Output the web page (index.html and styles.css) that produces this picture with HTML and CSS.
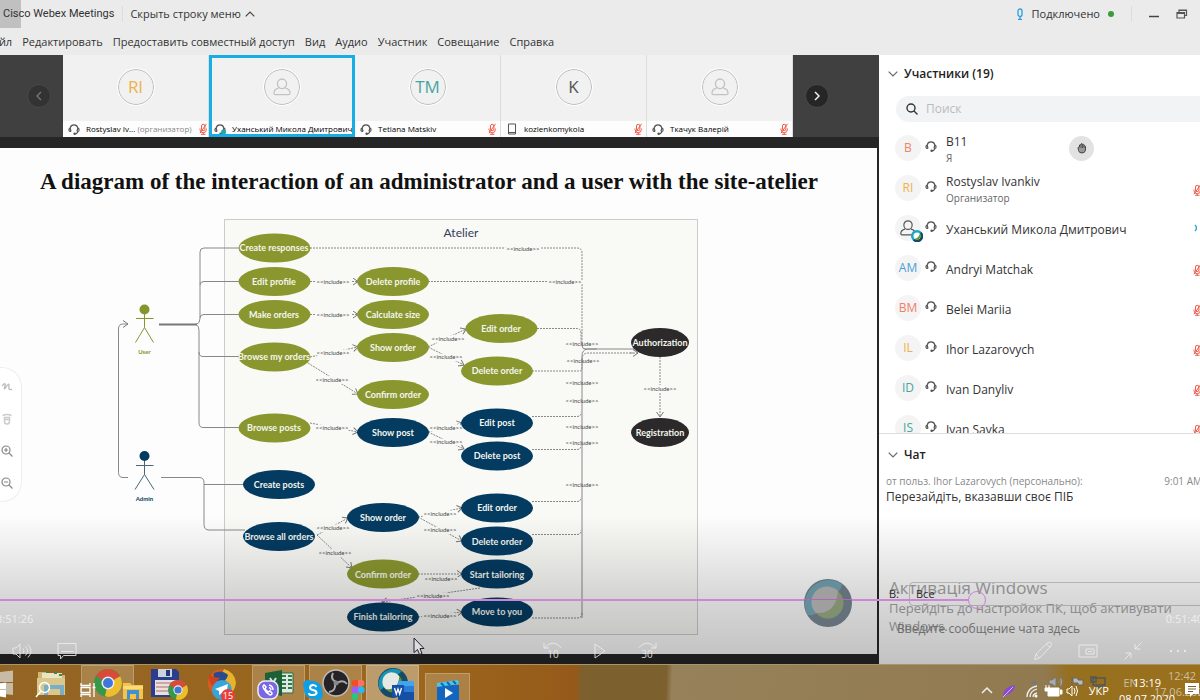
FILE: index.html
```html
<!DOCTYPE html>
<html lang="ru">
<head>
    <meta charset="UTF-8">
    <meta name="viewport" content="width=device-width, initial-scale=1.0">
    <title>Cisco Webex Meetings</title>
    <link rel="stylesheet" href="styles.css">
</head>
<body>
    <!-- Shared icons -->
    <svg class="sprite" aria-hidden="true">
        <symbol id="headset" viewBox="0 0 12 12">
            <path d="M3 8.500H2.200A1.300 1.300 0 0 1 1 7.200V6.400A1.200 1.200 0 0 1 2.200 5.200V4.800a3.900 3.900 0 0 1 7.600 0v.4A1.200 1.200 0 0 1 11 6.400v.8a1.300 1.300 0 0 1-1.200 1.300C9.600 10 8.500 10.800 7 10.800M2.200 5.200L3 8.500M9.800 5.200L9 8.500" fill="none" stroke="currentColor" stroke-width="1.200"/>
            <circle cx="6.600" cy="10.700" r="1.200" fill="currentColor"/>
        </symbol>
        <symbol id="muted" viewBox="0 0 10 12">
            <path d="M3.500 3a1.700 1.700 0 0 1 3.400 0v3a1.700 1.700 0 0 1-3.400 0zM2 5.500v1a3.200 3.200 0 0 0 6.400 0v-1M5.200 9.700v1.500M3 11.300h4.500M8.500 .8L2 10.200" fill="none" stroke="currentColor" stroke-width="1"/>
        </symbol>
        <symbol id="person" viewBox="0 0 20 20">
            <path d="M10 2a4.600 4.600 0 0 1 4.600 4.600c0 2.700-2 5-4.600 5s-4.600-2.300-4.600-5A4.600 4.600 0 0 1 10 2zM6.700 11.200C4 11.800 2 13.500 2 16.200c0 1 .6 1.500 1.500 1.500h13c.9 0 1.500-.5 1.500-1.500 0-2.700-2-4.400-4.700-5" fill="none" stroke="currentColor" stroke-width="1.300"/>
        </symbol>
        <symbol id="chrome" viewBox="0 0 28 28">
            <circle cx="14" cy="14" r="14" fill="#37974b"/>
            <path d="M14 14L1.900 7A14 14 0 0 1 26.100 7z" fill="#d84b3a"/>
            <path d="M14 14L26.100 7A14 14 0 0 1 14 28l-3-1 3-13z" fill="#edbd2e"/>
            <path d="M14 7h12.100L14 14z" fill="#d84b3a"/>
            <circle cx="14" cy="14" r="6.500" fill="#eee"/>
            <circle cx="14" cy="14" r="5" fill="#3d78d8"/>
        </symbol>
        <symbol id="chevron-down" viewBox="0 0 10 6">
            <path d="M.7.700L5 5 9.300.7" fill="none" stroke="currentColor" stroke-width="1.200"/>
        </symbol>
    </svg>

    <header class="header">
        <div class="titlebar">
            <span class="app-name">Cisco Webex Meetings</span>
            <button class="hide-menu" type="button">Скрыть строку меню
                <svg width="10" height="6" viewBox="0 0 10 6"><path d="M.7 5.300L5 1l4.300 4.300" fill="none" stroke="#444" stroke-width="1.200"/></svg>
            </button>
            <div class="status">
                <svg width="8" height="12" viewBox="0 0 8 12"><path d="M2 3a2 2 0 0 1 4 0v3.500a2 2 0 0 1-4 0zM4 9v2M2 11.300h4" fill="none" stroke="#2ba0dc" stroke-width="1.300"/></svg>
                <span>Подключено</span>
                <i class="dot"></i>
            </div>
            <div class="window-buttons">
                <button type="button" aria-label="Свернуть"><svg width="10" height="12" viewBox="0 0 10 12"><path d="M0 8.500h10" stroke="#444" stroke-width="1.500"/></svg></button>
                <button type="button" aria-label="Восстановить"><svg width="12" height="12" viewBox="0 0 12 12"><path d="M1 4.500h7.500v5.500H1zM3 4V2h7.500v5.500H9M1 5.500h7.500M3 2.500h7" fill="none" stroke="#555" stroke-width="1.200"/></svg></button>
            </div>
        </div>
        <nav class="menubar">
            <button type="button">Файл</button>
            <button type="button">Редактировать</button>
            <button type="button">Предоставить совместный доступ</button>
            <button type="button">Вид</button>
            <button type="button">Аудио</button>
            <button type="button">Участник</button>
            <button type="button">Совещание</button>
            <button type="button">Справка</button>
        </nav>
    </header>

    <main class="meeting">
        <section class="stage">
            <div class="filmstrip">
                <button class="scroll prev" type="button" aria-label="Назад"><svg width="8" height="10" viewBox="0 0 8 10"><path d="M6 1L2 5l4 4" fill="none" stroke="currentColor" stroke-width="1.300"/></svg></button>
                <div class="tiles">
                    <div class="tile">
                        <div class="face yellow">RI</div>
                        <div class="caption"><svg class="hs"><use href="#headset"/></svg><span>Rostyslav Iv... <em>(организатор)</em></span><svg class="mic"><use href="#muted"/></svg></div>
                    </div>
                    <div class="tile active">
                        <div class="face"><svg width="20" height="20"><use href="#person"/></svg></div>
                        <div class="caption"><svg class="hs" viewBox="0 0 12 12"><use href="#headset"/><circle cx="9.500" cy="9" r="2.500" fill="#1caab0"/></svg><span>Уханський Микола Дмитрович</span></div>
                    </div>
                    <div class="tile">
                        <div class="face teal">TM</div>
                        <div class="caption"><svg class="hs"><use href="#headset"/></svg><span>Tetiana Matskiv</span><svg class="mic"><use href="#muted"/></svg></div>
                    </div>
                    <div class="tile">
                        <div class="face dark">K</div>
                        <div class="caption"><svg class="hs" viewBox="0 0 12 12"><path d="M2.500 1h7v10h-7zM2.500 9.500h7" fill="none" stroke="currentColor"/></svg><span>kozlenkomykola</span><svg class="mic"><use href="#muted"/></svg></div>
                    </div>
                    <div class="tile">
                        <div class="face"><svg width="20" height="20"><use href="#person"/></svg></div>
                        <div class="caption"><svg class="hs"><use href="#headset"/></svg><span>Ткачук Валерій</span><svg class="mic"><use href="#muted"/></svg></div>
                    </div>
                </div>
                <button class="scroll next" type="button" aria-label="Вперёд"><svg width="8" height="10" viewBox="0 0 8 10"><path d="M2 1l4 4-4 4" fill="none" stroke="currentColor" stroke-width="1.500"/></svg></button>
            </div>

            <div class="slide">
                <h1>A diagram of the interaction of an administrator and a user with the site-atelier</h1>
                <svg class="diagram" viewBox="100 210 620 440">
                    <defs>
                        <marker id="arrow" viewBox="0 0 8 8" refX="7" refY="4" markerWidth="8" markerHeight="8" markerUnits="userSpaceOnUse" orient="auto"><path d="M2 .5L7 4 2 7.500" fill="none" stroke="#777"/></marker>
                    </defs>
                    <rect class="frame" x="224.500" y="219.500" width="473" height="415"/>
                    <text class="heading" x="461" y="237">Atelier</text>

                    <!-- actors -->
                    <g class="actor user">
                        <circle cx="144.500" cy="309.500" r="5"/>
                        <path d="M144.500 314v13.500l-9 15M144.500 327.500l9 15M136 318.500h17.500"/>
                        <text x="144.500" y="354">User</text>
                    </g>
                    <g class="actor admin">
                        <circle cx="144.500" cy="456" r="5"/>
                        <path d="M144.500 461v13.500l-9.500 15M144.500 474.500l9.500 15M136 465.500h17.500"/>
                        <text x="144.500" y="501">Admin</text>
                    </g>

                    <!-- solid links -->
                    <g class="link">
                        <path marker-end="url(#arrow)" d="M128 477.500h-5q-4.500 0-4.500-5V329q0-5 4.500-5h5"/>
                        <path d="M159 324.500h37q4-1 4-6V252q0-4 4-4h35M200 285q0-3.500 4-3.500h35M200 318q0-3.500 4-3.500h35M196 324.500q3 1 3 6v92q0 5 4 5h36M199 352q0 4.500 4 4.500h36"/>
                        <path class="thick" d="M159 324.500h38"/>
                        <path d="M161 477.500h38q5 0 5 5v42q0 5.500 5 5.500h36M204 484.500h40"/>
                        <path d="M596 349h39M582 342v4q0 3 4 3h10M582 618V356q0-6 5-7h10"/>
                    </g>

                    <!-- dashed links -->
                    <g class="link dashed">
                        <path d="M310 248h267q5 0 5 5v90M428 281.500h153M537 328.500h40q4 0 4 5v8M532 371h48q2 0 2-5v-6q0-7 6-7h45"/>
                        <path d="M532 416.500h45q4 0 4-4M532 449.500h45q4 0 4-4M532 501.500h45q4 0 4-4M532 534.500h45q4 0 4-4M532 618h45q5 0 5-5"/>
                        <path marker-end="url(#arrow)" d="M630 353h8"/>
                        <path marker-end="url(#arrow)" d="M660 357v60"/>
                        <path marker-end="url(#arrow)" d="M310 281.500h48"/>
                        <path marker-end="url(#arrow)" d="M310 314.500h48"/>
                        <path marker-end="url(#arrow)" d="M310 357l48-10"/>
                        <path marker-end="url(#arrow)" d="M308 363l50 31"/>
                        <path marker-end="url(#arrow)" d="M310 423l48 9"/>
                        <path marker-end="url(#arrow)" d="M428 347l38-18"/>
                        <path marker-end="url(#arrow)" d="M428 347l36 18"/>
                        <path marker-end="url(#arrow)" d="M428 432l34-9"/>
                        <path marker-end="url(#arrow)" d="M428 432l36 17"/>
                        <path marker-end="url(#arrow)" d="M317 535l31-17"/>
                        <path marker-end="url(#arrow)" d="M317 535l35 33"/>
                        <path marker-end="url(#arrow)" d="M418 517l44-9"/>
                        <path marker-end="url(#arrow)" d="M418 517l44 24"/>
                        <path marker-end="url(#arrow)" d="M418 574h44"/>
                        <path marker-end="url(#arrow)" d="M480 588l-98 14"/>
                        <path marker-end="url(#arrow)" d="M418 617l44-5"/>
                    </g>
                    <g class="include">
                        <text x="523" y="251">&lt;&lt;include&gt;&gt;</text>
                        <text x="565" y="284">&lt;&lt;include&gt;&gt;</text>
                        <text x="333" y="284">&lt;&lt;include&gt;&gt;</text>
                        <text x="333" y="317">&lt;&lt;include&gt;&gt;</text>
                        <text x="333" y="355">&lt;&lt;include&gt;&gt;</text>
                        <text x="332" y="382">&lt;&lt;include&gt;&gt;</text>
                        <text x="332" y="430">&lt;&lt;include&gt;&gt;</text>
                        <text x="448" y="341">&lt;&lt;include&gt;&gt;</text>
                        <text x="446" y="359">&lt;&lt;include&gt;&gt;</text>
                        <text x="446" y="430">&lt;&lt;include&gt;&gt;</text>
                        <text x="446" y="444">&lt;&lt;include&gt;&gt;</text>
                        <text x="333" y="530">&lt;&lt;include&gt;&gt;</text>
                        <text x="335" y="555">&lt;&lt;include&gt;&gt;</text>
                        <text x="440" y="516">&lt;&lt;include&gt;&gt;</text>
                        <text x="440" y="532">&lt;&lt;include&gt;&gt;</text>
                        <text x="441" y="581">&lt;&lt;include&gt;&gt;</text>
                        <text x="433" y="598">&lt;&lt;include&gt;&gt;</text>
                        <text x="440" y="618">&lt;&lt;include&gt;&gt;</text>
                        <text x="660" y="391">&lt;&lt;include&gt;&gt;</text>
                    </g>
                    <g class="include crossing">
                        <text x="582" y="346">&lt;&lt;include&gt;&gt;</text>
                        <text x="583" y="363">&lt;&lt;include&gt;&gt;</text>
                        <text x="582" y="385">&lt;&lt;include&gt;&gt;</text>
                        <text x="582" y="403">&lt;&lt;include&gt;&gt;</text>
                        <text x="582" y="429">&lt;&lt;include&gt;&gt;</text>
                        <text x="582" y="445">&lt;&lt;include&gt;&gt;</text>
                        <text x="582" y="487">&lt;&lt;include&gt;&gt;</text>
                    </g>

                    <!-- use cases -->
                    <g class="node green">
                        <ellipse cx="274.500" cy="248" rx="36" ry="14.500"/><text x="274" y="251">Create responses</text>
                        <ellipse cx="274.500" cy="281.500" rx="36" ry="14.500"/><text x="274" y="285">Edit profile</text>
                        <ellipse cx="274.500" cy="314.500" rx="36" ry="14.500"/><text x="274" y="318">Make orders</text>
                        <ellipse cx="274.500" cy="357" rx="36" ry="14.500"/><text x="274" y="360">Browse my orders</text>
                        <ellipse cx="274.500" cy="428" rx="36" ry="14.500"/><text x="274" y="431">Browse posts</text>
                        <ellipse cx="393" cy="281.500" rx="36" ry="14.500"/><text x="393" y="285">Delete profile</text>
                        <ellipse cx="393" cy="314.500" rx="36" ry="14.500"/><text x="393" y="318">Calculate size</text>
                        <ellipse cx="393" cy="347.500" rx="36" ry="14.500"/><text x="393" y="351">Show order</text>
                        <ellipse cx="393" cy="394.500" rx="36" ry="14.500"/><text x="393" y="398">Confirm order</text>
                        <ellipse cx="501.500" cy="328.500" rx="36" ry="14.500"/><text x="501" y="332">Edit order</text>
                        <ellipse cx="497" cy="371" rx="36" ry="14.500"/><text x="497" y="374">Delete order</text>
                        <ellipse cx="383" cy="574" rx="36" ry="14.500"/><text x="383" y="578">Confirm order</text>
                    </g>
                    <g class="node blue">
                        <ellipse cx="393" cy="432.500" rx="36" ry="14.500"/><text x="393" y="436">Show post</text>
                        <ellipse cx="497" cy="423" rx="36" ry="14.500"/><text x="497" y="426">Edit post</text>
                        <ellipse cx="497" cy="456" rx="36" ry="14.500"/><text x="497" y="459">Delete post</text>
                        <ellipse cx="279" cy="484.500" rx="36" ry="14.500"/><text x="279" y="488">Create posts</text>
                        <ellipse cx="279" cy="536.500" rx="36" ry="14.500"/><text x="279" y="540">Browse all orders</text>
                        <ellipse cx="383" cy="517.500" rx="36" ry="14.500"/><text x="383" y="521">Show order</text>
                        <ellipse cx="497" cy="508" rx="36" ry="14.500"/><text x="497" y="511">Edit order</text>
                        <ellipse cx="497" cy="541" rx="36" ry="14.500"/><text x="497" y="545">Delete order</text>
                        <ellipse cx="497" cy="574" rx="36" ry="14.500"/><text x="497" y="578">Start tailoring</text>
                        <ellipse cx="383" cy="617" rx="36" ry="14.500"/><text x="383" y="620">Finish tailoring</text>
                        <ellipse cx="497" cy="612" rx="36" ry="14.500"/><text x="497" y="615">Move to you</text>
                    </g>
                    <g class="node black">
                        <ellipse cx="660" cy="342.500" rx="29" ry="14.500"/><text x="660" y="346">Authorization</text>
                        <ellipse cx="660" cy="432.500" rx="29" ry="14.500"/><text x="660" y="436">Registration</text>
                    </g>
                </svg>

                <div class="zoom-tools">
                    <button type="button" aria-label="Аннотация"><svg width="12" height="12" viewBox="0 0 12 12"><path d="M1 5c2-3 4-3 3 0s-1 4 1 1 3-4 3-1-1 4 3 3.500" fill="none" stroke="#bbb" stroke-width="1.300"/></svg></button>
                    <button type="button" aria-label="Указатель"><svg width="12" height="12" viewBox="0 0 12 12"><path d="M1.500 2.500Q6 .5 10.500 2.500M3.500 4.500h5v4a2.500 2.500 0 0 1-5 0zM3.500 6.500h5" fill="none" stroke="#ccc" stroke-width="1.500"/></svg></button>
                    <button type="button" aria-label="Увеличить"><svg width="12" height="12" viewBox="0 0 12 12"><path d="M5 1a4 4 0 1 1 0 8 4 4 0 0 1 0-8zM8 8l3.500 3.500M3 5h4M5 3v4" fill="none" stroke="#888" stroke-width="1.200"/></svg></button>
                    <button type="button" aria-label="Уменьшить"><svg width="12" height="12" viewBox="0 0 12 12"><path d="M5 1a4 4 0 1 1 0 8 4 4 0 0 1 0-8zM8 8l3.500 3.500M3 5h4" fill="none" stroke="#888" stroke-width="1.200"/></svg></button>
                </div>
            </div>
        </section>

        <aside class="sidebar">
            <section class="participants">
                <h2><svg width="10" height="6"><use href="#chevron-down"/></svg>Участники (19)</h2>
                <label class="search">
                    <svg width="12" height="12" viewBox="0 0 12 12"><path d="M5 1a4 4 0 1 1 0 8 4 4 0 0 1 0-8zM8 8l3.500 3.500" fill="none" stroke="#333" stroke-width="1.400"/></svg>
                    <input type="search" placeholder="Поиск" aria-label="Поиск">
                </label>
                <ul>
                    <li><span class="avatar red">B</span><svg class="hs"><use href="#headset"/></svg><span class="name">B11<small>Я</small></span>
                        <button class="hand" type="button" aria-label="Рука"><svg width="12" height="12" viewBox="0 0 12 12"><path d="M2 5.500l1.500-.5V3q1-1 1.500 0V2q1-1 1.500 0v.5q1-.8 1.500.3v1q1-.6 1.500.5V8q-.5 3-3.500 3T2.500 8.500z" fill="#999" stroke="#444"/><path d="M5 3v3M6.500 3v3M8 4v2" stroke="#444" stroke-width=".8"/></svg></button></li>
                    <li><span class="avatar yellow">RI</span><svg class="hs"><use href="#headset"/></svg><span class="name">Rostyslav Ivankiv<small>Организатор</small></span><svg class="mic"><use href="#muted"/></svg></li>
                    <li><span class="avatar dark"><svg width="18" height="18"><use href="#person"/></svg><svg class="ball" viewBox="0 0 12 12"><circle cx="6" cy="6" r="6" fill="#18a5c8"/><path d="M10.500 2A6 6 0 0 1 2 10.500z" fill="#174a66"/><circle cx="6" cy="6" r="3.500" fill="#fff"/><path d="M9 3.500A4 4 0 0 1 3.500 9q4-1 5.500-5.500" fill="#5a9c36"/></svg></span><svg class="hs"><use href="#headset"/></svg><span class="name">Уханський Микола Дмитрович</span><svg class="talk" viewBox="0 0 6 10"><path d="M1 2q3 3 0 6" fill="none" stroke="#2ba0dc" stroke-width="1.300"/></svg></li>
                    <li><span class="avatar blue">AM</span><svg class="hs"><use href="#headset"/></svg><span class="name">Andryi Matchak</span><svg class="mic"><use href="#muted"/></svg></li>
                    <li><span class="avatar red">BM</span><svg class="hs"><use href="#headset"/></svg><span class="name">Belei Mariia</span><svg class="mic"><use href="#muted"/></svg></li>
                    <li><span class="avatar yellow">IL</span><svg class="hs"><use href="#headset"/></svg><span class="name">Ihor Lazarovych</span><svg class="mic"><use href="#muted"/></svg></li>
                    <li><span class="avatar teal">ID</span><svg class="hs"><use href="#headset"/></svg><span class="name">Ivan Danyliv</span><svg class="mic"><use href="#muted"/></svg></li>
                    <li><span class="avatar teal">IS</span><svg class="hs"><use href="#headset"/></svg><span class="name">Ivan Savka</span><svg class="mic"><use href="#muted"/></svg></li>
                </ul>
            </section>
            <section class="chat">
                <h2><svg width="10" height="6"><use href="#chevron-down"/></svg>Чат</h2>
                <div class="message">
                    <div class="meta"><span>от польз. Ihor Lazarovych (персонально):</span><time>9:01 AM</time></div>
                    <p>Перезайдіть, вказавши своє ПІБ</p>
                </div>
                <div class="recipient">
                    <label for="to">В:</label>
                    <select id="to"><option>Все</option></select>
                </div>
                <textarea placeholder="Введите сообщение чата здесь" aria-label="Сообщение"></textarea>
            </section>
            <div class="watermark">
                <strong>Активація Windows</strong>
                Перейдіть до настройок ПК, щоб активувати Windows.
            </div>
        </aside>

        <!-- playback controls laid over the recording -->
        <div class="player">
            <input class="seek" type="range" min="0" max="1000" value="819" aria-label="Позиция">
            <div class="times"><span class="elapsed">3:51:26</span><span class="remaining">0:51:40</span></div>
            <div class="controls">
                <div class="group left">
                    <button type="button" aria-label="Громкость"><svg width="20" height="18" viewBox="0 0 20 18"><path d="M1 6h3l4-4v14l-4-4H1zM11 6.500q2 2.500 0 5M13.500 4.500q4 4.500 0 9M16 2.500q6 6.500 0 13"/></svg></button>
                    <button type="button" aria-label="Субтитры"><svg width="20" height="18" viewBox="0 0 20 18"><path d="M1 1.500h18v12H6.500l-3 3.500v-3.500H1zM4 9.500h13"/></svg></button>
                </div>
                <div class="group center">
                    <button type="button" aria-label="Назад 10"><svg width="20" height="20" viewBox="0 0 20 20"><path d="M1 2v5h5M1.500 7Q10-3 18.500 7"/><text x="10" y="17">10</text></svg></button>
                    <button type="button" aria-label="Пуск"><svg width="12" height="18" viewBox="0 0 12 18"><path d="M1 2l10 7-10 7z"/></svg></button>
                    <button type="button" aria-label="Вперёд 30"><svg width="20" height="20" viewBox="0 0 20 20"><path d="M19 2v5h-5M18.500 7Q10-3 1.500 7"/><text x="10" y="17">30</text></svg></button>
                </div>
                <div class="group right">
                    <button type="button" aria-label="Править"><svg width="20" height="20" viewBox="0 0 20 20"><path d="M1.500 18.500l1.500-5.500L15 1.500q2-1 3 .5t0 3L6.500 17zM3 13l3.500 4M13.500 3l3.500 3.500"/></svg></button>
                    <button type="button" aria-label="Мини-окно"><svg width="20" height="14" viewBox="0 0 20 14"><path d="M1 1h18v12H1zM8 5h8v5H8zM10 7.500h4"/></svg></button>
                    <button type="button" aria-label="Свернуть"><svg width="20" height="20" viewBox="0 0 20 20"><path d="M18.500 1.500L12 8M12 3v5h5.500M1.500 18.500L8 12M8 17v-5H2.500"/></svg></button>
                    <button type="button" aria-label="Ещё"><svg width="20" height="4" viewBox="0 0 20 4"><path d="M2 2h2M9 2h2M16 2h2" stroke-width="2"/></svg></button>
                </div>
            </div>
        </div>
        <svg class="webex-ball" viewBox="0 0 48 48">
            <circle cx="24" cy="24" r="24" fill="#64717b"/>
            <path d="M3.500 36A24 24 0 0 1 38 5q-1 6-5 9L15 32q-4 5-11.500 4z" fill="#648e9c"/>
            <circle cx="24" cy="24" r="15.500" fill="#80906f"/>
            <path d="M34 12a15.500 15.500 0 1 0-22 22q20 1 22-22z" fill="#a09f9f"/>
            <path d="M0 20.500h48" stroke="#b067b8"/>
        </svg>
        <svg class="cursor" viewBox="0 0 12 18"><path d="M1 1v14.500l3.500-3 2 5 2.500-1-2-5H11z" fill="#ddd" stroke="#223"/></svg>
    </main>

    <footer class="taskbar">
        <div class="apps">
            <button class="start" type="button" aria-label="Пуск"><svg width="14" height="28" viewBox="0 0 14 28"><path d="M0 3l13-1.500V13H0zM0 14h13v12L0 24.500z" fill="#c7bba6"/></svg></button>
            <button type="button" aria-label="Проводник"><svg width="30" height="28" viewBox="0 0 30 28"><path d="M2 3h10l2 3h15v20H2z" fill="#cdb878"/><path d="M6 4h20v8H6z" fill="#eee3c0"/><path d="M1 9h28v17H1z" fill="#d9c88e"/><path d="M8 16h20v10h-4v-6H12v6H8z" fill="#78aec8"/><path d="M10 3h3M18 4h3M23 6h3" stroke="#37875b" stroke-width="2"/></svg></button>
            <button class="open" type="button" aria-label="Chrome"><svg width="28" height="28"><use href="#chrome"/></svg></button>
            <button type="button" aria-label="Диск"><svg width="30" height="30" viewBox="0 0 30 30"><path d="M1 1h25l3 3v25H1z" fill="#2b3d91"/><path d="M8 1h14v8H8z" fill="#ccd3dc"/><path d="M16 2h4v6h-4z" fill="#26357d"/><path d="M5 12h21v15H5z" fill="#e8e2df"/><path d="M6 15h19M6 19h19M6 23h19" stroke="#b46b6b"/></svg></button>
            <button type="button" aria-label="Firefox"><svg width="30" height="30" viewBox="0 0 30 30"><circle cx="14.500" cy="15" r="13.500" fill="#dc5a20"/><path d="M17 1q11 3 12 14-1 9-9 13 3-10-2-16-4-6-1-11z" fill="#e8b32c"/><path d="M7 5q8-4 14 2-2 8-10 7-6-4-4-9z" fill="#294a8c"/><path d="M2 6l4 3 7 1-4 4 1 5q-8 1-8-13z" fill="#cc431d"/></svg></button>
            <button class="open" type="button" aria-label="Excel"><svg width="30" height="28" viewBox="0 0 30 28"><path d="M13 4h16v20H13z" fill="#dfe9df" stroke="#246c42"/><path d="M18 7h4M24 7h4M18 11h4M24 11h4M18 15h4M24 15h4M18 19h4M24 19h4" stroke="#2b7a4b" stroke-width="2"/><path d="M1 4l17-3v26L1 24z" fill="#1c6038"/><path d="M6 9l6 10M12 9L6 19" stroke="#ddd" stroke-width="2"/></svg></button>
            <button class="open" type="button" aria-label="OBS"><svg width="28" height="28" viewBox="0 0 28 28"><circle cx="14" cy="14" r="13" fill="#252325" stroke="#bbb" stroke-width="1.500"/><path d="M14 13Q8 10 11 4M15 14q6-4 10 1M13 15q1 7-6 8" fill="none" stroke="#aaa" stroke-width="2"/><circle cx="14" cy="14" r="2.500" fill="#888"/></svg></button>
            <button class="open current" type="button" aria-label="Webex"><svg width="30" height="30" viewBox="0 0 48 48"><circle cx="24" cy="24" r="24" fill="#174a66"/><path d="M3.500 36A24 24 0 0 1 38 5z" fill="#1b93b0"/><circle cx="24" cy="24" r="15" fill="#57923c"/><path d="M34 13a15 15 0 1 0-21 21q20 1 21-21z" fill="#e5e9e5"/></svg></button>
        </div>
        <div class="apps front">
            <button class="start" type="button" aria-label="Пуск"><svg width="7" height="16" viewBox="0 0 7 16"><path d="M0 1.500L6 .5V7H0zM0 8h6v7.500L0 14.500z" fill="#fff"/></svg></button>
            <button type="button" aria-label="Поиск"><svg width="16" height="18" viewBox="0 0 16 18"><circle cx="9.500" cy="6.500" r="5" fill="none" stroke="#fff" stroke-width="1.500"/><path d="M6 10l-5 6" stroke="#fff" stroke-width="1.500"/></svg></button>
            <button type="button" aria-label="Задачи"><svg width="16" height="16" viewBox="0 0 16 16"><path d="M1 1v2.500h9V1M1 5.500h9v5H1zM1 15v-2.500h9V15M14 1v14M12.500 5.500h3" fill="none" stroke="#fff" stroke-width="1.300"/></svg></button>
            <button type="button" aria-label="Файлы"><svg width="20" height="18" viewBox="0 0 20 18"><path d="M0 2h7l2 2h11v14H0z" fill="#f6c445"/><path d="M4 9h12v9h-3v-5H7v5H4z" fill="#3d91d5"/><path d="M0 5h20v3H0z" fill="#fbdc78"/></svg></button>
            <button type="button" aria-label="Chrome"><svg width="20" height="20"><use href="#chrome"/></svg></button>
            <button type="button" aria-label="Telegram"><svg width="24" height="20" viewBox="0 0 24 20"><circle cx="11" cy="10" r="10" fill="#35a5dc"/><path d="M4 9l13-5-2 12-4-3-3 2V11z" fill="#fff"/><circle cx="17" cy="16" r="7" fill="#e9403b"/><text class="badge" x="17" y="19">15</text></svg></button>
            <button type="button" aria-label="Viber"><svg width="22" height="20" viewBox="0 0 22 20"><rect x="1" y="1" width="20" height="18" rx="7" fill="#7967e8" stroke="#eee" stroke-width="1.500"/><path d="M7 5q-2 1 0 4 2 4 6 6 2 0 2-2l-2-2-2 1-3-3 1-2zM12 5q4 1 4 5M12 7.500q2 .5 2 2.500" fill="none" stroke="#fff" stroke-width="1.500"/></svg></button>
            <button type="button" aria-label="Skype"><svg width="20" height="20" viewBox="0 0 20 20"><circle cx="10" cy="10" r="9" fill="#0d9fe6"/><circle cx="5" cy="5" r="5" fill="#0d9fe6"/><circle cx="15" cy="15" r="5" fill="#0d9fe6"/><path d="M13.500 7q-1-2-3.500-2T7 7.500q0 2 3 2.500t3.500 2.500-3.500 2.500-4-2" fill="none" stroke="#fff" stroke-width="2"/></svg></button>
            <button type="button" aria-label="Figma"><svg width="14" height="20" viewBox="0 0 14 20"><path d="M7 0H4a3.300 3.300 0 0 0 0 6.600h3z" fill="#f04e23"/><path d="M7 0h3a3.300 3.300 0 0 1 0 6.600H7z" fill="#ff7262"/><path d="M7 6.600H4a3.300 3.300 0 0 0 0 6.600h3z" fill="#a259ff"/><circle cx="10.300" cy="9.900" r="3.300" fill="#25b8fa"/><path d="M7 13.200H4A3.300 3.300 0 1 0 7 16.500z" fill="#20c980"/></svg></button>
            <button type="button" aria-label="Word"><svg width="22" height="20" viewBox="0 0 22 20"><path d="M6 1h16v19H6z" fill="#2c7cd6"/><path d="M6 1h16v5H6z" fill="#41a5ee"/><path d="M6 12h16v8H6z" fill="#1650a5"/><path d="M0 5h12v12H0z" fill="#174fa6"/><path d="M2.500 8l1.800 6L6 9l1.700 5 1.800-6" fill="none" stroke="#fff" stroke-width="1.300"/></svg></button>
            <button class="open" type="button" aria-label="Кино"><svg width="22" height="20" viewBox="0 0 22 20"><path d="M0 5h22v15H0z" fill="#1465bd"/><path d="M0 3l21-3 1 4L0 7z" fill="#49c7f1"/><path d="M4 3l3 3M10 2l3 3M16 1l3 3" stroke="#1568ad" stroke-width="2"/><path d="M8 8l8 5-8 5z" fill="#fff"/></svg></button>
        </div>
        <div class="tray back">
            <svg width="78" height="14" viewBox="0 0 78 14"><path d="M1 9l4-4 4 4z" fill="#777"/><path d="M20 5h3l4-3v10l-4-3h-3zM29 4q2 3 0 6M31.500 2q4 5 0 10" fill="#aaa" stroke="#777"/><path d="M43 2v10M44 3h5v2h5v5h-5V8h-5z" fill="#bbb" stroke="#666"/><path d="M64 3h12v7H64zM66 12h8M62 2h5v5h-5z" fill="none" stroke="#555" stroke-width="1.500"/></svg>
            <span class="lang">EN</span>
            <span class="clock">12:42<br>17.06.2020</span>
        </div>
        <div class="tray over">
            <svg width="98" height="16" viewBox="0 0 98 16"><path d="M1 10l5-5 5 5" fill="none" stroke="#eee" stroke-width="1.500"/><path d="M22 14Q22 4 34 2q-1 8-9 10z" fill="#8947d5"/><path d="M22 14L32 4" stroke="#d8b6ff"/><path d="M46 14q0-9 10-11M49 14q0-6 7-8M52 14q0-3 4-4" fill="none" stroke="#eee" stroke-width="1.300"/><circle cx="55" cy="13" r="1.500" fill="#fff"/><path d="M67 5h11v8H67zM79 7h2v4h-2M65 2v4M68 2v3M64 5h5v3h-5z" fill="#fff" stroke="#fff"/><path d="M86 6h2l3-3v10l-3-3h-2zM93 5q2 3 0 6M95 3q3 5 0 10" fill="none" stroke="#fff"/></svg>
            <span class="lang">УКР</span>
            <span class="clock">13:19<br>08.07.2020</span>
            <svg width="14" height="14" viewBox="0 0 14 14"><path d="M0 0h14v11H8l-3 3v-3H0z" fill="#fff"/><path d="M3 3.500h8M3 6h8M3 8.500h5" stroke="#776030"/></svg>
        </div>
    </footer>
</body>
</html>
```

FILE: styles.css
```css
* {
    box-sizing: border-box;
}
body {
    margin: 0;
    height: 100vh;
    display: flex;
    flex-direction: column;
    overflow: hidden;
    font-family: "Open Sans", "Noto Sans", sans-serif;
    font-size: 12px;
    line-height: 16px;
    color: #333;
}
button {
    font: inherit;
    color: inherit;
    background: none;
    border: none;
    padding: 0;
}
svg {
    display: block;
    flex: none;
}
.sprite {
    position: absolute;
    width: 0;
    height: 0;
}

/* Header */
.header {
    background-color: #ebebeb;
    font-size: 11px;
    height: 55px;
}
.titlebar {
    display: flex;
    align-items: center;
    height: 28px;
    background: linear-gradient(#c0c0c0, #c0c0c0) no-repeat 0 0 / 21px 28px;
}
.app-name {
    padding: 0 8px 0 3px;
    font-family: Roboto, sans-serif;
}
.hide-menu {
    display: flex;
    align-items: center;
    gap: 4px;
    border-left: 1px solid #ddd;
    padding-left: 7px;
}
.status {
    display: flex;
    align-items: center;
    gap: 8px;
    margin-left: auto;
    padding-right: 17px;
    border-right: 1px solid #ddd;
}
.dot {
    width: 6px;
    height: 6px;
    border-radius: 50%;
    background-color: #3a9a3c;
}
.window-buttons {
    display: flex;
    gap: 17px;
    padding: 0 12px 0 17px;
}
.menubar {
    display: flex;
    gap: 10px;
    margin-left: -16px;
    padding-top: 6px;
    white-space: nowrap;
}

/* Stage */
.meeting {
    position: relative;
    flex: 1;
    display: flex;
    min-height: 0;
}
.stage {
    flex: 1;
    min-width: 0;
    display: flex;
    flex-direction: column;
    background-color: #262626;
    padding: 0 2px 10px 0;
}
.filmstrip {
    display: flex;
    height: 82px;
    background-color: #404040;
    margin: 0 -2px 11px 0;
}
.scroll {
    width: 24px;
    height: 24px;
    border-radius: 50%;
    display: flex;
    align-items: center;
    justify-content: center;
    align-self: center;
    background-color: #333;
    border: 1px solid #4a4a4a;
    color: #777;
}
.prev {
    margin: 0 12px 0 27px;
}
.next {
    margin: 0 50px 0 12px;
    background-color: #262626;
    color: #eee;
}
.tiles {
    flex: 1;
    display: grid;
    grid-template-columns: repeat(5, 1fr);
}
.tile {
    position: relative;
    display: flex;
    flex-direction: column;
    justify-content: space-between;
    align-items: center;
    background-color: #f1f1f1;
    padding-top: 14px;
    border-right: 1px solid #ddd;
    min-width: 0;
}
.tile.active::after {
    content: "";
    position: absolute;
    inset: 0 -1px 0 0;
    border: 3px solid #17ade5;
}
.face {
    width: 36px;
    height: 36px;
    border: 1px solid #bbb;
    border-radius: 50%;
    outline: 1px solid #fff;
    display: flex;
    align-items: center;
    justify-content: center;
    font-size: 17px;
    color: #c2c2c2;
}
.caption {
    display: flex;
    align-items: center;
    gap: 6px;
    width: 100%;
    height: 16px;
    padding: 0 3px 0 5px;
    background-color: #fdfdfd;
    font-size: 8px;
    color: #000;
    white-space: nowrap;
}
.caption em {
    font-style: normal;
    color: #888;
}
.hs {
    width: 12px;
    height: 12px;
    color: #555;
}
.mic {
    width: 10px;
    height: 12px;
    margin-left: auto;
    color: #ef5b47;
}
.yellow { color: #f0b14b; }
.teal { color: #45a69e; }
.red { color: #f08068; }
.blue { color: #4a9fd8; }
.dark { color: #555; }

/* Slide */
.slide {
    position: relative;
    flex: 1;
    min-height: 0;
    background-color: #fdfdfd;
}
.slide h1 {
    margin: 0;
    padding: 18px 0 13px 40px;
    font: bold 23px/31px "Liberation Serif", serif;
    color: #111;
    white-space: nowrap;
}
.diagram {
    width: 620px;
    height: 440px;
    margin-left: 100px;
    font-family: Lato, sans-serif;
    text-anchor: middle;
}
.frame {
    fill: #f9faf6;
    stroke: #ccc;
}
.heading {
    font-size: 12px;
    fill: #34405a;
}
.actor path {
    fill: none;
}
.actor text {
    font-size: 6px;
    font-weight: bold;
}
.user { fill: #87952f; stroke: none; }
.user path { stroke: #87952f; }
.admin { fill: #043b61; }
.admin path { stroke: #486675; }
.link {
    fill: none;
    stroke: #888;
}
.link .thick {
    stroke: #777;
    stroke-width: 2;
}
.dashed {
    stroke-dasharray: 2 1;
}
.include {
    font-size: 6px;
    fill: #444;
    paint-order: stroke;
    stroke: #f9faf6;
    stroke-width: 4px;
}
.crossing {
    stroke: none;
}
.node text {
    font-size: 9px;
    font-weight: bold;
    fill: #f4f6ee;
}
.green { fill: #8a972f; }
.node.blue { fill: #043b61; }
.black { fill: #2b292a; }
.zoom-tools {
    position: absolute;
    left: 0;
    top: 219px;
    width: 22px;
    padding: 13px 0 12px 1px;
    display: flex;
    flex-direction: column;
    gap: 20px;
    border: 1px solid #eee;
    border-left: none;
    border-radius: 0 20px 20px 0;
    background-color: #fff;
}

/* Sidebar */
.sidebar {
    position: relative;
    isolation: isolate;
    width: 321px;
    display: flex;
    flex-direction: column;
    overflow: hidden;
    background-color: #fff;
}
.sidebar h2 {
    display: flex;
    align-items: center;
    gap: 6px;
    margin: 0;
    padding-left: 9px;
    font-size: 12px;
    font-weight: 600;
    line-height: 16px;
    color: #222;
}
.sidebar h2 svg {
    color: #666;
}
.participants {
    height: 379px;
    padding-top: 11px;
    overflow: hidden;
    border-bottom: 1px solid #ddd;
}
.search {
    display: flex;
    align-items: center;
    gap: 8px;
    height: 26px;
    margin: 14px -14px 6px 17px;
    padding-left: 10px;
    border-radius: 13px;
    background-color: #f1f3f5;
}
.search input {
    flex: 1;
    border: none;
    padding: 0;
    background: none;
    font: inherit;
}
.search input::placeholder {
    color: #bbb;
}
.participants ul {
    list-style: none;
    margin: 0;
    padding: 0 0 0 16px;
}
.participants li {
    display: flex;
    align-items: center;
    height: 40px;
    position: relative;
}
.avatar {
    position: relative;
    width: 26px;
    height: 26px;
    border-radius: 50%;
    display: flex;
    align-items: center;
    justify-content: center;
    background-color: #f4f4f4;
}
.ball {
    position: absolute;
    right: -2px;
    bottom: -1px;
    width: 12px;
    height: 12px;
}
.participants .hs {
    margin: 0 9px 4px 4px;
}
.name {
    padding-top: 3px;
}
.name small {
    display: block;
    font-size: 10px;
    color: #666;
}
.hand {
    position: absolute;
    left: 174px;
    width: 25px;
    height: 25px;
    border-radius: 50%;
    display: flex;
    align-items: center;
    justify-content: center;
    background-color: #e2e2e2;
}
.participants .mic {
    margin: 3px -2px 0 auto;
}
.talk {
    width: 6px;
    height: 10px;
    margin-left: auto;
}
.chat {
    flex: 1;
    display: flex;
    flex-direction: column;
    padding-top: 13px;
}
.message {
    padding: 10px 0 0 7px;
}
.meta {
    display: flex;
    justify-content: space-between;
    margin-right: -2px;
    font-size: 10px;
    color: #888;
    white-space: nowrap;
}
.message p {
    margin: 0;
    font-size: 12px;
}
.recipient {
    display: flex;
    align-items: center;
    gap: 10px;
    margin-top: auto;
    padding-left: 10px;
    font-size: 11px;
}
.recipient select {
    flex: 1;
    height: 24px;
    margin-right: -10px;
    padding: 0 6px;
    border: 1px solid #ccc;
    border-radius: 4px 0 0 4px;
    background: none;
    appearance: none;
    font: inherit;
    color: inherit;
}
.chat textarea {
    height: 45px;
    margin: 13px 0 0 18px;
    padding: 2px 0;
    border: none;
    background: none;
    resize: none;
    font: inherit;
}
.chat textarea::placeholder {
    color: #888;
}
.watermark {
    position: absolute;
    z-index: -1;
    left: 10px;
    right: 14px;
    bottom: 29px;
    font-size: 13px;
    line-height: 18px;
    color: #a4a4a4;
}
.watermark strong {
    display: block;
    font-size: 17px;
    line-height: 22px;
    font-weight: 400;
}

/* Player overlay */
.player {
    position: absolute;
    left: 0;
    right: 0;
    bottom: 0;
    padding-top: 76px;
    background: linear-gradient(rgba(0, 0, 0, 0), rgba(0, 0, 0, 0.15) 55%, rgba(0, 0, 0, 0.24));
    color: #eee;
    overflow: hidden;
}
.seek {
    display: block;
    width: 100%;
    height: 18px;
    margin: 0;
    appearance: none;
    background: linear-gradient(#cc86d6, #cc86d6) no-repeat 0 8px / 80.7% 2px;
}
.seek::-webkit-slider-thumb {
    appearance: none;
    width: 18px;
    height: 18px;
    border: 1px solid #cf7bd8;
    border-radius: 50%;
}
.times {
    display: flex;
    justify-content: space-between;
    margin: 2px -3px 0 -4px;
    font-size: 11px;
    line-height: 16px;
}
.controls {
    display: grid;
    grid-template-columns: 1fr 1fr 1fr;
    align-items: center;
    height: 26px;
    margin: 11px 0 0;
    padding: 0 12px;
}
.controls svg {
    fill: none;
    stroke: #eee;
    opacity: 0.85;
}
.controls text {
    font-size: 10px;
    text-anchor: middle;
    fill: #eee;
    stroke: none;
}
.group {
    display: flex;
    align-items: center;
}
.left,
.right {
    gap: 25px;
}
.center {
    justify-content: center;
    gap: 31px;
}
.right {
    justify-content: flex-end;
}
.webex-ball {
    position: absolute;
    left: 804px;
    bottom: 37px;
    width: 48px;
    height: 48px;
}
.cursor {
    position: absolute;
    left: 413px;
    bottom: 9px;
    width: 12px;
    height: 18px;
}

/* Taskbar */
.taskbar {
    position: relative;
    height: 36px;
    overflow: hidden;
    border-top: 1px solid #a9946c;
    background: linear-gradient(92deg, #936524 0, #9c661c 35%, #955a1a 48%, #7c602e 48.5%, #7c602e 55.5%, #97815a 56%, #917a50 87%, #96701f 89%, #9a701c 100%);
}
.apps {
    display: flex;
    gap: 4px;
    height: 36px;
}
.apps button {
    width: 53px;
    display: flex;
    align-items: center;
    justify-content: center;
}
.apps .start {
    width: 20px;
    justify-content: flex-start;
}
.apps .open {
    background-color: rgba(205, 185, 150, 0.35);
    border: 1px solid rgba(230, 210, 180, 0.35);
}
.apps .current {
    background-color: rgba(215, 200, 175, 0.55);
}
.front {
    position: absolute;
    left: 0;
    top: 8px;
    gap: 0;
    height: 30px;
}
.front button {
    width: 45px;
    padding-top: 4px;
}
.badge {
    font-size: 9px;
    text-anchor: middle;
    fill: #fff;
}
.tray {
    position: absolute;
    display: flex;
    gap: 10px;
    font-size: 11px;
    line-height: 16px;
    white-space: nowrap;
}
.clock {
    text-align: center;
}
.back {
    right: -10px;
    top: 3px;
    gap: 16px;
    color: #ccbfa2;
}
.back .lang {
    padding-top: 7px;
}
.back > svg {
    margin-top: 7px;
}
.over {
    right: 1px;
    top: 10px;
    color: #fff;
}
.over .lang {
    padding-top: 8px;
}
.over > svg {
    margin-top: 8px;
}
```
